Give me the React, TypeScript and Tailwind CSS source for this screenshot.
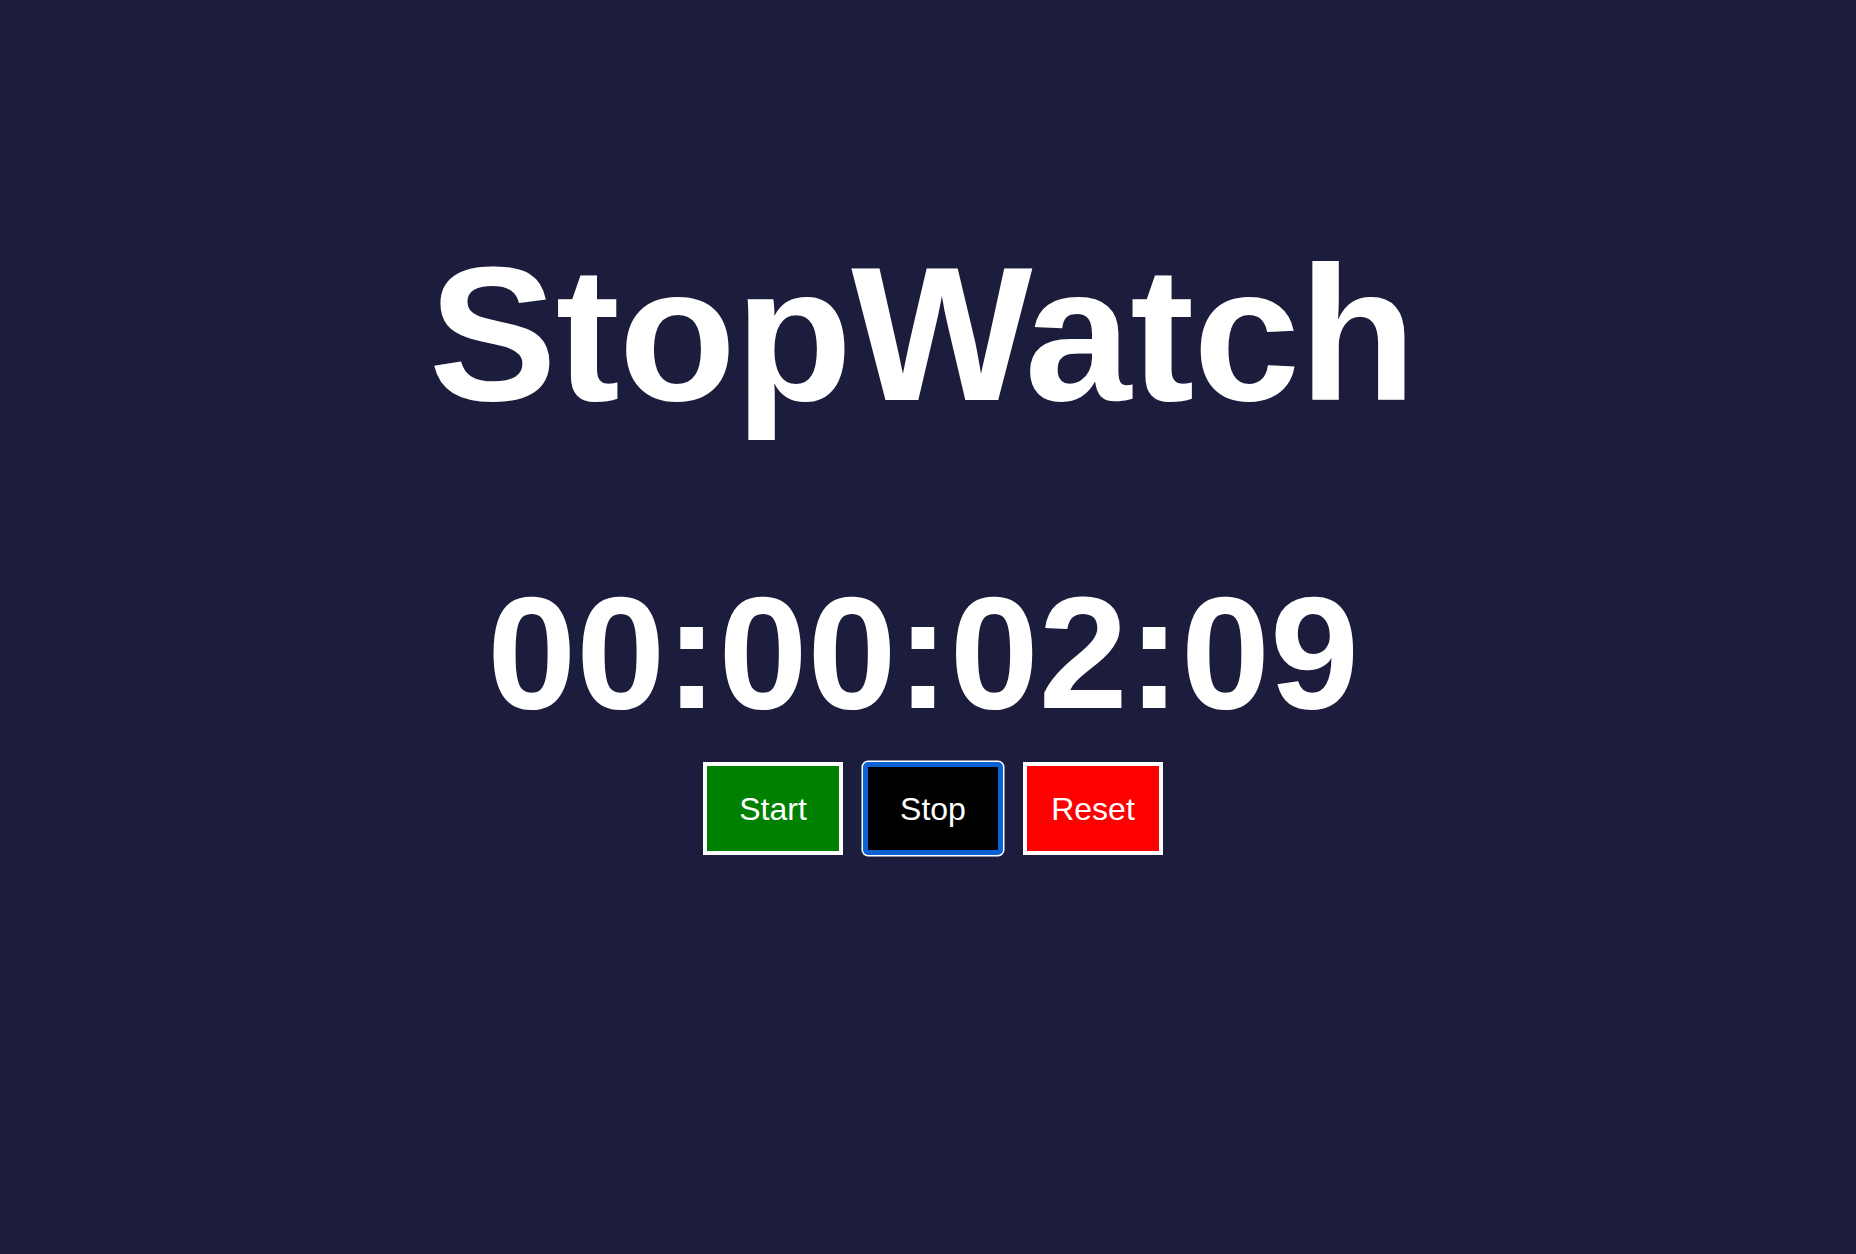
import { useEffect, useRef, useState } from "react";

// elapsed time is kept in hundredths of a second
const pad = (n: number) => String(n).padStart(2, "0");

const format = (cs: number) => {
  const hours = Math.floor(cs / 360000);
  const minutes = Math.floor((cs % 360000) / 6000);
  const seconds = Math.floor((cs % 6000) / 100);
  const hundredths = cs % 100;
  return `${pad(hours)}:${pad(minutes)}:${pad(seconds)}:${pad(hundredths)}`;
};

const App = () => {
  const [elapsed, setElapsed] = useState(209);
  const [running, setRunning] = useState(false);
  const timer = useRef<number | null>(null);

  useEffect(() => {
    if (!running) return;
    timer.current = window.setInterval(() => setElapsed((e) => e + 1), 10);
    return () => {
      if (timer.current) window.clearInterval(timer.current);
    };
  }, [running]);

  return (
    <div className="min-h-screen w-full bg-[#1c1c3c] text-white font-['Liberation_Sans',Arial,sans-serif]">
      <div className="flex flex-col items-center pt-[238px]">
        {/* Title */}
        <h1 className="mr-[12px] text-[192px] leading-none font-bold tracking-[-1px]">StopWatch</h1>

        {/* Time readout */}
        <div className="mt-[143px] mr-[10px] text-[160px] leading-none font-bold">{format(elapsed)}</div>

        {/* Controls */}
        <div className="mt-[29px] ml-[10px] flex items-center gap-5">
          <button
            className="w-[140px] h-[93px] border-4 border-white bg-[#008000] text-[32px] text-white"
            onClick={() => setRunning(true)}
          >
            Start
          </button>
          <button
            className="w-[140px] h-[93px] rounded-[5px] border-[5px] border-[#0b61d4] ring-[1.5px] ring-white bg-black text-[32px] text-white"
            onClick={() => setRunning(false)}
          >
            Stop
          </button>
          <button
            className="w-[140px] h-[93px] border-4 border-white bg-[#ff0000] text-[32px] text-white"
            onClick={() => {
              setRunning(false);
              setElapsed(0);
            }}
          >
            Reset
          </button>
        </div>
      </div>
    </div>
  );
};

export default App;
